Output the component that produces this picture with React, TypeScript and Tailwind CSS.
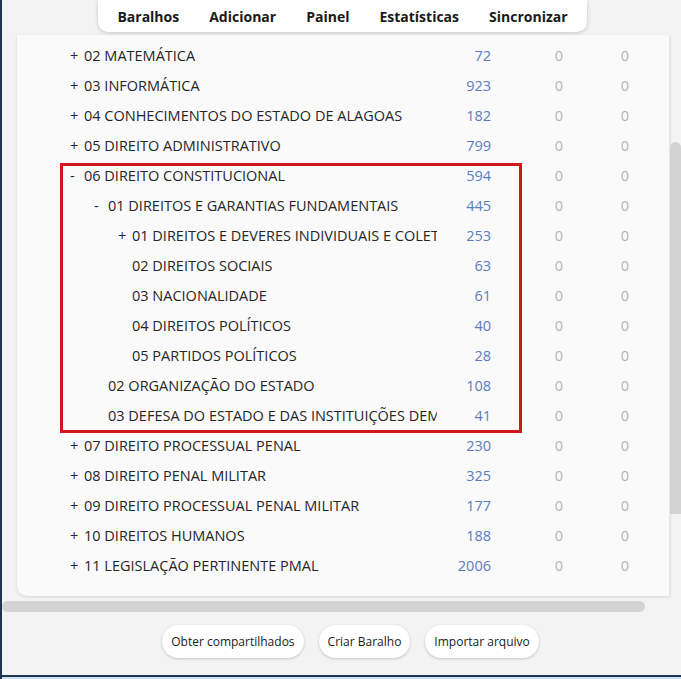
import React from "react";

type Row = { level: number; sign: string; name: string; count: number };

const rows: Row[] = [
  { level: 0, sign: "+", name: "02 MATEMÁTICA", count: 72 },
  { level: 0, sign: "+", name: "03 INFORMÁTICA", count: 923 },
  { level: 0, sign: "+", name: "04 CONHECIMENTOS DO ESTADO DE ALAGOAS", count: 182 },
  { level: 0, sign: "+", name: "05 DIREITO ADMINISTRATIVO", count: 799 },
  { level: 0, sign: "-", name: "06 DIREITO CONSTITUCIONAL", count: 594 },
  { level: 1, sign: "-", name: "01 DIREITOS E GARANTIAS FUNDAMENTAIS", count: 445 },
  { level: 2, sign: "+", name: "01 DIREITOS E DEVERES INDIVIDUAIS E COLETIVOS", count: 253 },
  { level: 2, sign: "", name: "02 DIREITOS SOCIAIS", count: 63 },
  { level: 2, sign: "", name: "03 NACIONALIDADE", count: 61 },
  { level: 2, sign: "", name: "04 DIREITOS POLÍTICOS", count: 40 },
  { level: 2, sign: "", name: "05 PARTIDOS POLÍTICOS", count: 28 },
  { level: 1, sign: "", name: "02 ORGANIZAÇÃO DO ESTADO", count: 108 },
  { level: 1, sign: "", name: "03 DEFESA DO ESTADO E DAS INSTITUIÇÕES DEMOCRÁTICAS", count: 41 },
  { level: 0, sign: "+", name: "07 DIREITO PROCESSUAL PENAL", count: 230 },
  { level: 0, sign: "+", name: "08 DIREITO PENAL MILITAR", count: 325 },
  { level: 0, sign: "+", name: "09 DIREITO PROCESSUAL PENAL MILITAR", count: 177 },
  { level: 0, sign: "+", name: "10 DIREITOS HUMANOS", count: 188 },
  { level: 0, sign: "+", name: "11 LEGISLAÇÃO PERTINENTE PMAL", count: 2006 },
];

const indentClass = ["pl-0", "pl-[24px]", "pl-[48px]"];

export default function App() {
  return (
    <div
      className="relative w-[681px] h-[679px] overflow-hidden bg-[#f3f3f3] border-l-2 border-[#1f3550]"
      style={{ fontFamily: '"Open Sans", "Noto Sans", sans-serif' }}
    >
      {/* toolbar */}
      <div className="flex justify-center pl-[2px]">
        <div className="flex h-[32px] items-center gap-[30px] rounded-b-[10px] bg-white px-[19px] text-[14px] font-bold text-[#1a1a1a] shadow-[0_1px_4px_rgba(0,0,0,0.18)]">
          <span>Baralhos</span>
          <span>Adicionar</span>
          <span>Painel</span>
          <span>Estatísticas</span>
          <span>Sincronizar</span>
        </div>
      </div>

      {/* card */}
      <div className="ml-[15px] mt-[3px] w-[653px] rounded-bl-[10px] border-r border-[#e6e6e6] bg-[#fafafa] pb-[15px] pt-[6px] pl-[53px] shadow-[0_1px_3px_rgba(0,0,0,0.12)]">
        {rows.map((r, i) => (
          <div key={i} className="flex h-[30px] items-center text-[14.5px]">
            <div className={`w-[367px] overflow-hidden whitespace-nowrap ${indentClass[r.level]}`}>
              <div className="flex items-center text-[#262626]">
                <span className="inline-block w-[14px] shrink-0">{r.sign}</span>
                <span>{r.name}</span>
              </div>
            </div>
            <div className="w-[54px] text-right text-[#5b7dbd]">{r.count}</div>
            <div className="ml-[35px] w-[66px] text-center text-[#b3b3b3]">0</div>
            <div className="w-[66px] text-center text-[#b3b3b3]">0</div>
          </div>
        ))}
      </div>

      {/* horizontal scrollbar */}
      <div className="mt-[5px] h-[11px] w-[643px] rounded-full bg-[#d3d3d3]" />

      {/* buttons */}
      <div className="mt-[13px] flex justify-center gap-[15px] pl-[18px] text-[12px] font-medium text-[#1a1a1a]">
        <button className="h-[33px] rounded-full bg-white px-[9px] shadow-[0_1px_3px_rgba(0,0,0,0.2)]">
          Obter compartilhados
        </button>
        <button className="h-[33px] rounded-full bg-white px-[9px] shadow-[0_1px_3px_rgba(0,0,0,0.2)]">
          Criar Baralho
        </button>
        <button className="h-[33px] rounded-full bg-white px-[9px] shadow-[0_1px_3px_rgba(0,0,0,0.2)]">
          Importar arquivo
        </button>
      </div>

      {/* vertical scrollbar */}
      <div className="absolute right-0 top-[142px] h-[372px] w-[11px] rounded-t-[6px] bg-[#d3d3d3]" />

      {/* red annotation */}
      <div className="absolute left-[58px] top-[163px] h-[270px] w-[462px] border-[3px] border-[#d0161d]" />

      {/* window bottom frame */}
      <div className="absolute bottom-0 left-0 right-0 h-[4px] border-t-2 border-[#1f3550] bg-[#cfe2f3]" />
    </div>
  );
}
